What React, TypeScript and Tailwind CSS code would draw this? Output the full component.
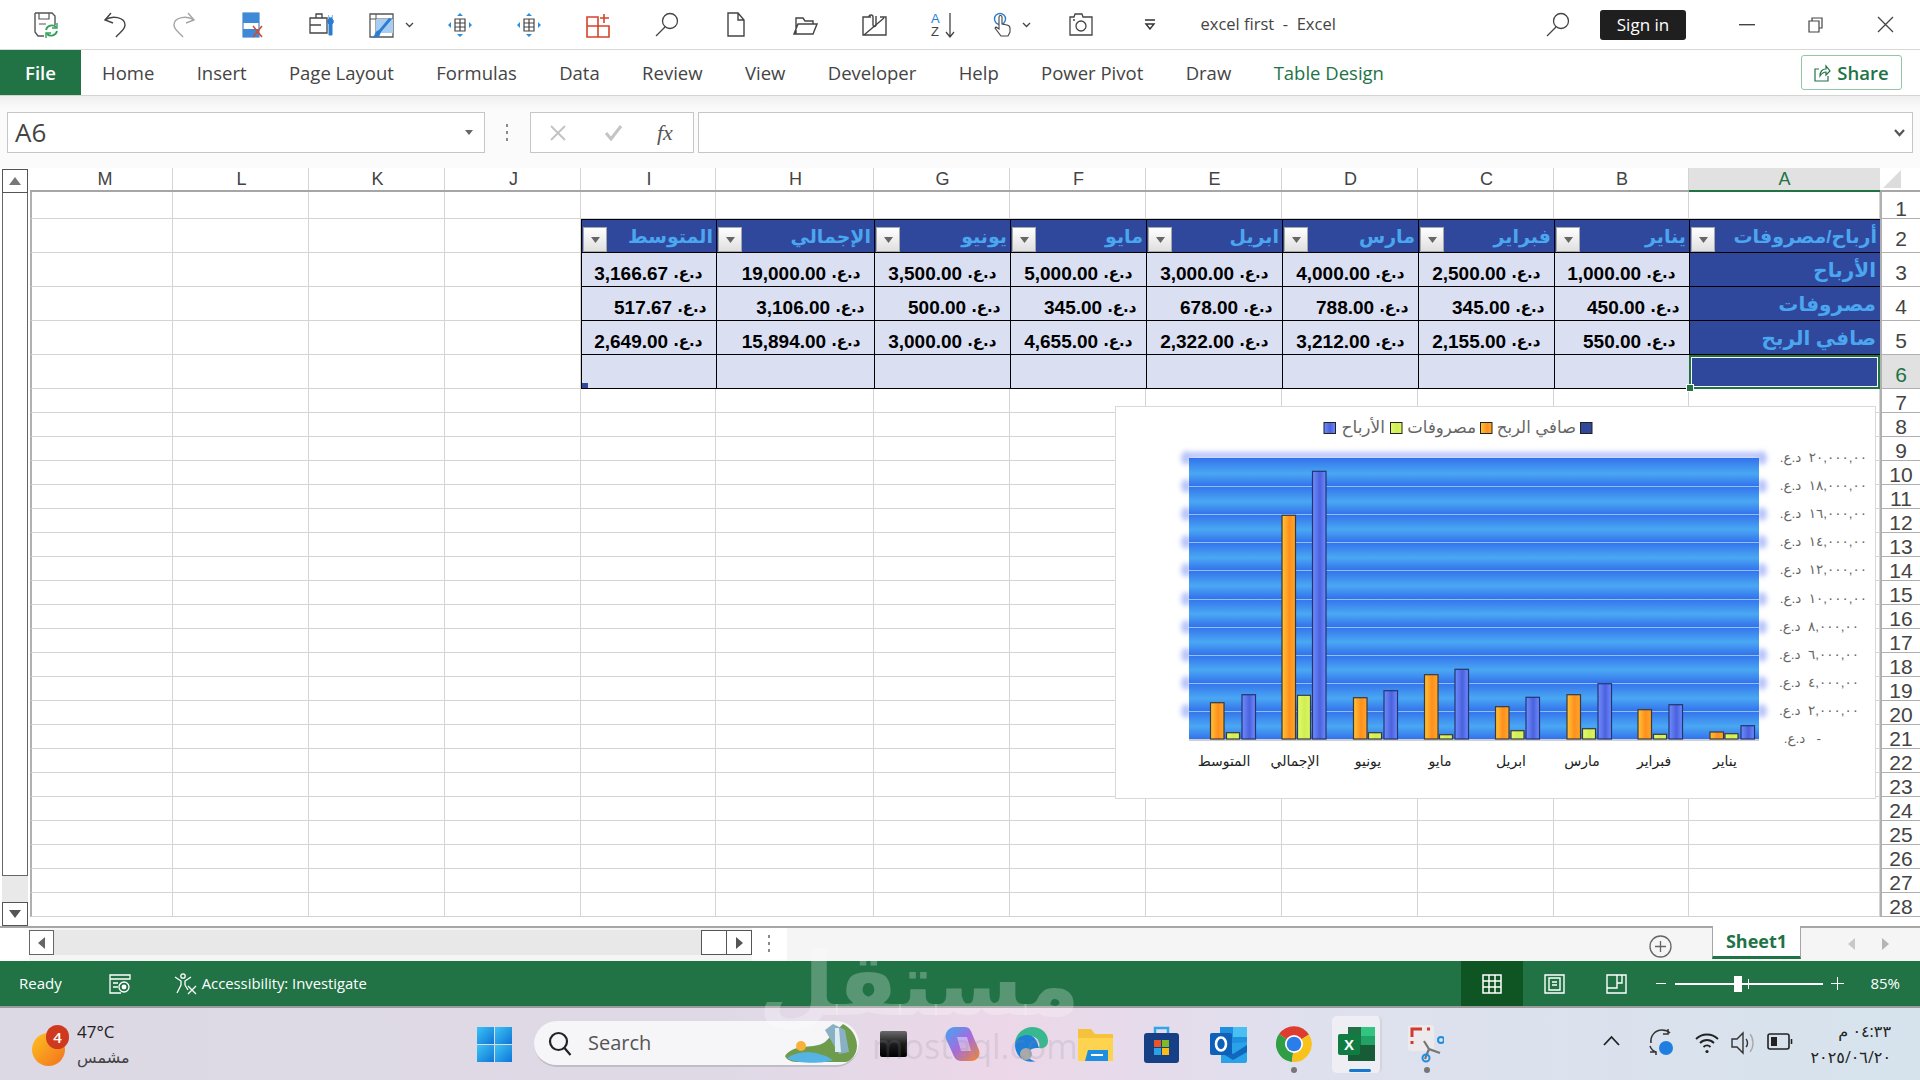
import type { ReactNode } from 'react';

const cols = 'grid grid-cols-[6px_137px_136px_136px_136px_135px_158px_136px_136px_136px_136px_136px_135px_191px_40px] grid-rows-[100%]';
const letters = ['M', 'L', 'K', 'J', 'I', 'H', 'G', 'F', 'E', 'D', 'C', 'B', 'A'];

const heads = ['المتوسط', 'الإجمالي', 'يونيو', 'مايو', 'ابريل', 'مارس', 'فبراير', 'يناير', 'أرباح/مصروفات'];
const body = [
  { label: 'الأرباح', pad: 'pr-[13.5px]', nums: ['3,166.67', '19,000.00', '3,500.00', '5,000.00', '3,000.00', '4,000.00', '2,500.00', '1,000.00'] },
  { label: 'مصروفات', pad: 'pr-[9.5px]', nums: ['517.67', '3,106.00', '500.00', '345.00', '678.00', '788.00', '345.00', '450.00'] },
  { label: 'صافي الربح', pad: 'pr-[13.5px]', nums: ['2,649.00', '15,894.00', '3,000.00', '4,655.00', '2,322.00', '3,212.00', '2,155.00', '550.00'] },
];

const tabs = ['Home', 'Insert', 'Page Layout', 'Formulas', 'Data', 'Review', 'View', 'Developer', 'Help', 'Power Pivot', 'Draw'];

// chart bars: [x, top] of orange, green, blue per group, left to right
const groups = [
  { label: 'المتوسط', lx: 1223, bars: [[1209.5, 701.7], [1225.5, 731.7], [1241, 693.7]] },
  { label: 'الإجمالي', lx: 1294, bars: [[1281, 514.3], [1296.5, 694.3], [1311.5, 470.3]] },
  { label: 'يونيو', lx: 1367, bars: [[1352.5, 696.7], [1367.5, 731.7], [1383, 689.7]] },
  { label: 'مايو', lx: 1439, bars: [[1423.5, 673.7], [1438.5, 733.7], [1454, 668.3]] },
  { label: 'ابريل', lx: 1510, bars: [[1494.5, 705.7], [1510, 729.7], [1525, 696.3]] },
  { label: 'مارس', lx: 1581, bars: [[1566, 693.7], [1581.5, 727.7], [1597, 682.7]] },
  { label: 'فبراير', lx: 1653, bars: [[1637, 708.7], [1652.5, 733.3], [1668, 703.7]] },
  { label: 'يناير', lx: 1724, bars: [[1709, 731], [1724, 732.7], [1740, 724.7]] },
];
const ticks = ['٢٠,٠٠٠,٠٠', '١٨,٠٠٠,٠٠', '١٦,٠٠٠,٠٠', '١٤,٠٠٠,٠٠', '١٢,٠٠٠,٠٠', '١٠,٠٠٠,٠٠', '٨,٠٠٠,٠٠', '٦,٠٠٠,٠٠', '٤,٠٠٠,٠٠', '٢,٠٠٠,٠٠'];
const gridY = [457, 485, 513, 541, 569, 598, 626, 654, 682, 710];

function Chevron() {
  return (
    <svg width="9" height="6" viewBox="0 0 9 6" fill="none" stroke="#444" strokeWidth="1.3"><path d="M1 1l3.5 3.5L8 1" /></svg>
  );
}

function Slot({ children }: { children: ReactNode }) {
  return <div className="w-[69px] h-full flex items-center justify-center gap-[10px] shrink-0">{children}</div>;
}

function SaveIcon() {
  return (
    <svg width="26" height="26" viewBox="0 0 26 26" fill="none">
      <path d="M2 1h17l3 3v9M2 1v19l3 4h6" stroke="#555" strokeWidth="1.4" />
      <path d="M6 1v6h10V1M6 12h7" stroke="#555" strokeWidth="1.2" />
      <path d="M13 18a6 6 0 0 1 10-3M24 19a6 6 0 0 1-10 3" stroke="#2f9e57" strokeWidth="1.8" />
      <path d="M24 11v5h-5M13 26v-5h5" stroke="#2f9e57" strokeWidth="1.4" />
    </svg>
  );
}
function UndoIcon({ c, flip }: { c: string; flip?: boolean }) {
  return (
    <svg width="24" height="26" viewBox="0 0 24 26" fill="none" stroke={c} strokeWidth="1.4" className={flip ? '-scale-x-100' : ''}>
      <path d="M8 1L2 8l8 3" />
      <path d="M2 8c7-5 20-3 20 5 0 5-6 8-9 12" />
    </svg>
  );
}
function ClearColIcon() {
  return (
    <svg width="22" height="26" viewBox="0 0 22 26">
      <rect x="1" y="1" width="16" height="24" fill="#fff" stroke="#2a6db5" />
      <rect x="1" y="1" width="16" height="10" fill="#3f8ad8" />
      <rect x="1" y="17" width="16" height="8" fill="#3f8ad8" />
      <path d="M11 14l9 11M20 14l-9 11" stroke="#d8472b" strokeWidth="1.5" />
    </svg>
  );
}
function ToolIcon() {
  return (
    <svg width="27" height="25" viewBox="0 0 27 25" fill="none">
      <path d="M1 6h17v15H1zM7 6V2h6v4M1 13h11" stroke="#444" strokeWidth="1.3" />
      <path d="M20 3v4a3 3 0 0 0 0 5v11h3V12a3 3 0 0 0 0-5V3" fill="#2b7cd3" stroke="#2b7cd3" />
      <circle cx="21.5" cy="4" r="1.6" fill="#fff" />
    </svg>
  );
}
function PaintTable() {
  return (
    <svg width="26" height="26" viewBox="0 0 26 26" fill="none">
      <path d="M1 2h23v23H1z" stroke="#555" strokeWidth="1.3" />
      <path d="M1 7h23M7 2v23" stroke="#555" />
      <rect x="7" y="7" width="17" height="14" fill="#a9cdf0" />
      <path d="M23 7L12 20l-2 5-7 1c3-2 3-6 5-7l2-1L20 6z" fill="#2b7cd3" />
    </svg>
  );
}
function ArrowsTable() {
  return (
    <svg width="24" height="24" viewBox="0 0 24 24" fill="none">
      <path d="M7 6h10v12H7zM12 6v12M7 10h10M7 14h10" stroke="#444" strokeWidth="1.2" />
      <path d="M12 0l3 3H9zM12 24l-3-3h6zM0 12l3-3v6zM24 12l-3 3V9z" fill="#2b8ddc" />
    </svg>
  );
}
function RedPlus() {
  return (
    <svg width="24" height="26" viewBox="0 0 24 26" fill="none" stroke="#d5432a" strokeWidth="1.6">
      <path d="M1 5h11v20H1zM12 14H1M12 14h11v11H12zM18 2v9M14 6h9" />
    </svg>
  );
}
function Magnifier() {
  return (
    <svg width="24" height="25" viewBox="0 0 24 25" fill="none" stroke="#444" strokeWidth="1.3">
      <circle cx="15" cy="9" r="7.5" />
      <path d="M10 15L1 24" />
    </svg>
  );
}
function DocIcon() {
  return (
    <svg width="18" height="25" viewBox="0 0 18 25" fill="none" stroke="#444" strokeWidth="1.4">
      <path d="M1 1h10l6 7v16H1zM11 1v7h6" />
    </svg>
  );
}
function FolderIcon() {
  return (
    <svg width="25" height="20" viewBox="0 0 25 20" fill="none" stroke="#444" strokeWidth="1.4">
      <path d="M3 19V3h7l2 3h8v3M1 19h19l4-10H5z" />
    </svg>
  );
}
function MailIcon() {
  return (
    <svg width="25" height="23" viewBox="0 0 25 23" fill="none" stroke="#444" strokeWidth="1.4">
      <path d="M9 4H1v18h23V4h-6M2 22L22 5" />
      <path d="M7 4a2 2 0 0 1 4 0v8a1 1 0 0 0 3 0V3" />
    </svg>
  );
}
function SortIcon() {
  return (
    <div className="relative w-[24px] h-[26px] leading-none font-['Liberation_Sans',sans-serif] text-[13px]">
      <span className="absolute left-0 top-0 text-[#2b7cd3]">A</span>
      <span className="absolute left-0 bottom-0 text-[#444]">Z</span>
      <svg className="absolute right-0 top-0" width="10" height="26" viewBox="0 0 10 26" fill="none" stroke="#444" strokeWidth="1.3"><path d="M5 1v24M1 20l4 5 4-5" /></svg>
    </div>
  );
}
function TouchIcon() {
  return (
    <svg width="19" height="25" viewBox="0 0 19 25" fill="none">
      <circle cx="7" cy="7" r="5.5" stroke="#2b7cd3" strokeWidth="1.4" />
      <path d="M6 9V5a1.5 1.5 0 0 1 3 0v7l5 1c2 .5 3 1 3 3v4l-2 4H8l-6-8 1-1 3 2z" fill="#fff" stroke="#444" strokeWidth="1.1" />
    </svg>
  );
}
function CameraIcon() {
  return (
    <svg width="24" height="23" viewBox="0 0 24 23" fill="none" stroke="#444" strokeWidth="1.3">
      <path d="M1 4h4l1-3h7l1 3h9v18H1z" />
      <circle cx="12" cy="13" r="5" />
      <path d="M4 7h2" />
    </svg>
  );
}

function TitleBar() {
  return (
    <div className="h-[50px] shrink-0 bg-white border-b border-[#d8d8d8] flex items-center pl-[11.5px]">
      <Slot><SaveIcon /></Slot>
      <Slot><UndoIcon c="#444" /></Slot>
      <Slot><UndoIcon c="#a5a5a5" flip /></Slot>
      <Slot><ClearColIcon /></Slot>
      <Slot><ToolIcon /></Slot>
      <Slot><PaintTable /><Chevron /></Slot>
      <Slot><ArrowsTable /></Slot>
      <Slot><ArrowsTable /></Slot>
      <Slot><RedPlus /></Slot>
      <Slot><Magnifier /></Slot>
      <Slot><DocIcon /></Slot>
      <Slot><FolderIcon /></Slot>
      <Slot><MailIcon /></Slot>
      <Slot><SortIcon /></Slot>
      <Slot><TouchIcon /><Chevron /></Slot>
      <Slot><CameraIcon /></Slot>
      <Slot>
        <svg width="12" height="11" viewBox="0 0 12 11" fill="none" stroke="#333" strokeWidth="1.4"><path d="M1 1h10M2 5l4 5 4-5z" /></svg>
      </Slot>
      <div className="ml-[16px] text-[16.5px] text-[#444] whitespace-pre">excel first  -  Excel</div>
      <div className="flex-1" />
      <Magnifier />
      <div className="ml-[30px] w-[86px] h-[30px] rounded-[3px] bg-[#1f1f1f] text-white text-[17px] flex items-center justify-center">Sign in</div>
      <svg className="ml-[53px]" width="16" height="2" viewBox="0 0 16 2"><rect width="16" height="1.4" fill="#444" /></svg>
      <svg className="ml-[53px]" width="15" height="16" viewBox="0 0 15 16" fill="none" stroke="#444" strokeWidth="1.2"><path d="M1 4h10v11H1zM4 4V1h10v10h-3" /></svg>
      <svg className="ml-[54px] mr-[26px]" width="17" height="17" viewBox="0 0 17 17" fill="none" stroke="#444" strokeWidth="1.3"><path d="M1 1l15 15M16 1L1 16" /></svg>
    </div>
  );
}

function TabBar() {
  return (
    <div className="h-[46px] shrink-0 bg-white border-b border-[#d4d4d4] flex items-stretch text-[18.5px] text-[#444]">
      <div className="w-[81px] bg-[#217346] text-white font-semibold flex items-center justify-center">File</div>
      <div className="flex items-center pl-[21px] pt-[1px] gap-[42.4px]">
        {tabs.map(t => <span key={t} className="whitespace-nowrap">{t}</span>)}
        <span className="text-[#217346] whitespace-nowrap">Table Design</span>
      </div>
      <div className="flex-1" />
      <div className="my-[5px] mr-[18px] w-[101px] border border-[#93c6a9] rounded-[3px] flex items-center justify-center gap-[6px] text-[#217346] font-semibold">
        <svg width="17" height="18" viewBox="0 0 17 18" fill="none" stroke="#217346" strokeWidth="1.2"><path d="M5 5H1v12h13v-5M6 12c0-5 3-7 6-7V2l4 5-4 4V8c-2 0-4 1-6 4z" /></svg>
        Share
      </div>
    </div>
  );
}

function FormulaBar() {
  return (
    <div className="h-[72px] shrink-0 pt-[16px] flex items-start bg-[linear-gradient(#efefef,#fbfbfb_14px)]">
      <div className="ml-[7px] w-[478px] h-[41px] bg-white border border-[#c6c6c6] flex items-center justify-between pl-[7px] pr-[11px]">
        <span className="text-[26px] text-[#444]">A6</span>
        <svg width="8" height="5" viewBox="0 0 8 5"><path d="M0 0h8L4 5z" fill="#666" /></svg>
      </div>
      <div className="w-[45px] h-[41px] flex items-center justify-center">
        <svg width="3" height="17" viewBox="0 0 3 17" fill="#8a8a8a"><rect width="2" height="3" /><rect y="7" width="2" height="3" /><rect y="14" width="2" height="3" /></svg>
      </div>
      <div className="w-[164px] h-[41px] bg-white border border-[#c6c6c6] flex items-center pl-[18px]">
        <svg width="18" height="18" viewBox="0 0 18 18" fill="none" stroke="#c4c4c4" strokeWidth="2"><path d="M2 2l14 14M16 2L2 16" /></svg>
        <svg className="ml-[37px]" width="19" height="16" viewBox="0 0 19 16" fill="none" stroke="#c4c4c4" strokeWidth="3"><path d="M2 8l5 6L17 1" /></svg>
        <span className="ml-[34px] font-['Liberation_Serif',serif] italic text-[22px] text-[#555]">fx</span>
      </div>
      <div className="ml-[4px] w-[1215px] h-[41px] bg-white border border-[#c6c6c6] flex items-center justify-end pr-[7px]">
        <svg width="11" height="8" viewBox="0 0 11 8" fill="none" stroke="#555" strokeWidth="2.2"><path d="M1 1l4.5 5L10 1" /></svg>
      </div>
    </div>
  );
}

function ColumnHeader() {
  return (
    <div className={`${cols} h-[24px] border-b-2 border-[#a6a6a6] font-['Liberation_Sans',sans-serif] text-[18px] leading-none text-[#444] bg-white`}>
      <div />
      {letters.map(l => (
        <div key={l} className={l === 'A'
          ? 'bg-[#e1e1e1] -mb-[2px] border-b-2 border-[#217346] text-[#217346] flex items-center justify-center'
          : 'border-r border-[#d4d4d4] flex items-center justify-center pl-[2px]'}>{l}</div>
      ))}
      <div className="relative">
        <svg className="absolute left-[3px] top-[2px]" width="18" height="18" viewBox="0 0 18 18"><path d="M0 18L18 18V0z" fill="#dcdcdc" /></svg>
      </div>
    </div>
  );
}

function RowNo({ n, on }: { n: number; on?: boolean }) {
  return (
    <div className={`border-l-2 border-b border-[#b0b0b0] flex items-center justify-center text-[21px] leading-none font-['Liberation_Sans',sans-serif] ${n <= 6 ? 'pt-[6px]' : 'pt-[3px]'} ${on ? 'bg-[#e1e1e1] text-[#217346]' : 'bg-white text-[#444]'}`}>{n}</div>
  );
}

function EmptyCells({ count }: { count: number }) {
  return (
    <>
      <div className="border-b border-[#d4d4d4] border-l-2 border-l-[#b0b0b0]" />
      {Array.from({ length: count }).map((_, i) => <div key={i} className="border-r border-b border-[#d4d4d4]" />)}
    </>
  );
}

function FilterBtn() {
  return (
    <div className="absolute left-[1px] top-[7px] w-[24px] h-[25px] border border-[#a8a8a8] bg-[linear-gradient(#ffffff,#dfdfdf)] flex items-center justify-center">
      <svg width="9" height="6" viewBox="0 0 9 6"><path d="M0 0h9L4.5 6z" fill="#666" /></svg>
    </div>
  );
}

function Row({ h, n, children, on }: { h: string; n: number; children: ReactNode; on?: boolean }) {
  return (
    <div className={`${cols} ${h}`}>
      {children}
      <RowNo n={n} on={on} />
    </div>
  );
}

function Sheet() {
  const arabic = "font-['Liberation_Sans','DejaVu_Sans',sans-serif] font-bold";
  const blank = Array.from({ length: 22 }).map((_, i) => i + 7);
  return (
    <div className="relative h-[758px] shrink-0 pl-[30px] overflow-hidden bg-white">
      <ColumnHeader />
      <Row h="h-[27px]" n={1}><EmptyCells count={13} /></Row>

      <Row h="h-[34px]" n={2}>
        <EmptyCells count={4} />
        {heads.map(t => (
          <div key={t} dir="rtl" className={`relative bg-[#30489c] border-t border-b border-l border-black text-[#4ba6f0] text-[19px] leading-[33px] pr-[3px] whitespace-nowrap overflow-hidden ${arabic}`}>
            {t}
            <div dir="ltr"><FilterBtn /></div>
          </div>
        ))}
      </Row>

      {body.map((r, i) => (
        <Row key={r.label} h="h-[34px]" n={i + 3}>
          <EmptyCells count={4} />
          {r.nums.map((v, j) => (
            <div key={j} className={`bg-[#dadff2] border-l border-b border-black text-[19px] leading-none text-black flex items-center justify-end gap-[5px] pt-[8px] ${r.pad} ${arabic}`}>
              <span className="font-['Liberation_Sans',sans-serif]">{v}</span>
              <span dir="rtl" className="font-['DejaVu_Sans',sans-serif] text-[15px]">د.ع.</span>
            </div>
          ))}
          <div dir="rtl" className={`bg-[#30489c] border-l border-b border-black text-[#4ba6f0] text-[20px] leading-[34px] pr-[4px] whitespace-nowrap overflow-hidden ${arabic}`}>{r.label}</div>
        </Row>
      ))}

      <Row h="h-[34px]" n={6} on>
        <EmptyCells count={4} />
        {heads.slice(0, 8).map((t, i) => (
          <div key={t} className="relative bg-[#dadff2] border-l border-b border-black">
            {i === 0 && <div className="absolute left-0 bottom-0 w-[6px] h-[5px] bg-[#30489c]" />}
          </div>
        ))}
        <div className="relative bg-[#30489c] border-2 border-[#217346] outline outline-1 outline-white -outline-offset-[3px]">
          <div className="absolute -left-[5px] -bottom-[5px] w-[8px] h-[8px] bg-[#217346] border border-white" />
        </div>
      </Row>

      {blank.map(n => (
        <Row key={n} h="h-[24px]" n={n}><EmptyCells count={13} /></Row>
      ))}

      <div className="absolute left-[2px] top-[1px] bottom-0 w-[26px] flex flex-col bg-[#e9e9e9]">
        <div className="h-[24px] shrink-0 border border-[#555] bg-white flex items-center justify-center">
          <svg width="12" height="8" viewBox="0 0 12 8"><path d="M0 8h12L6 0z" fill="#777" /></svg>
        </div>
        <div className="h-[683px] shrink-0 border-x border-b border-[#666] bg-white" />
        <div className="flex-1" />
        <div className="h-[24px] shrink-0 border border-[#555] bg-white flex items-center justify-center">
          <svg width="12" height="8" viewBox="0 0 12 8"><path d="M0 0h12L6 8z" fill="#555" /></svg>
        </div>
      </div>

      <Chart />
    </div>
  );
}

function Bar({ x, top, w, fill, stroke }: { x: number; top: number; w: number; fill: string; stroke: string }) {
  return <rect x={x} y={top} width={w} height={738 - top} fill={`url(#${fill})`} stroke={stroke} strokeWidth="1.2" />;
}

function Chart() {
  const ar = { fontFamily: "'Liberation Sans','DejaVu Sans',sans-serif" };
  return (
    <div className="absolute left-[1115px] top-[238px] w-[761px] h-[393px] bg-white border border-[#d9d9d9]">
      <svg width="761" height="393" viewBox="1115 406 761 393" style={ar}>
        <defs>
          <linearGradient id="band" x1="0" y1="0" x2="0" y2="1">
            <stop offset="0" stopColor="#3372ec" />
            <stop offset="0.55" stopColor="#4aa8f3" />
            <stop offset="1" stopColor="#3372ec" />
          </linearGradient>
          <pattern id="bands" x="0" y="457" width="10" height="28.1" patternUnits="userSpaceOnUse">
            <rect width="10" height="28.1" fill="url(#band)" />
          </pattern>
          <linearGradient id="og"><stop offset="0" stopColor="#ffc535" /><stop offset="0.55" stopColor="#ff8f1e" /><stop offset="1" stopColor="#ffa82a" /></linearGradient>
          <linearGradient id="gr"><stop offset="0" stopColor="#e6f870" /><stop offset="0.55" stopColor="#cdef50" /><stop offset="1" stopColor="#e0f565" /></linearGradient>
          <linearGradient id="bl"><stop offset="0" stopColor="#708cff" /><stop offset="0.55" stopColor="#4a62dc" /><stop offset="1" stopColor="#6f8aff" /></linearGradient>
          <filter id="soft" x="-50%" y="-50%" width="200%" height="200%"><feGaussianBlur stdDeviation="2.5" /></filter>
        </defs>

        <g filter="url(#soft)" fill="#b8c4fa">
          <rect x="1184" y="451" width="578" height="7" />
          {gridY.map(y => (
            <g key={y}>
              <ellipse cx="1185" cy={y} rx="5" ry="7" />
              <ellipse cx="1761" cy={y} rx="5" ry="7" />
            </g>
          ))}
        </g>
        <rect x="1188" y="457" width="570" height="281" fill="url(#bands)" />
        {gridY.slice(1).map(y => <rect key={y} x="1188" y={y} width="570" height="1" fill="#8fc0f8" />)}
        <rect x="1188" y="738" width="570" height="2" fill="#cfcfcf" />

        {groups.map(g => (
          <g key={g.label}>
            <Bar x={g.bars[0][0]} top={g.bars[0][1]} w={13.5} fill="og" stroke="#3a3a3a" />
            <Bar x={g.bars[1][0]} top={g.bars[1][1]} w={13} fill="gr" stroke="#3a3a3a" />
            <Bar x={g.bars[2][0]} top={g.bars[2][1]} w={13.5} fill="bl" stroke="#22356f" />
            <text x={g.lx} y="765" textAnchor="middle" fontSize="14" fill="#222">{g.label}</text>
          </g>
        ))}

        {ticks.map((t, i) => (
          <text key={t} x={i < 6 ? 1866 : 1858} y={gridY[i] + 4} direction="rtl" textAnchor="start" fontSize="13.5" fill="#666" xmlSpace="preserve">{t + '  د.ع.'}</text>
        ))}
        <text x="1820" y="742" direction="rtl" textAnchor="start" fontSize="13.5" fill="#666" xmlSpace="preserve">{'-   د.ع.'}</text>

        <rect x="1323" y="421.5" width="11.5" height="11" fill="url(#bl)" stroke="#222" />
        <text x="1384" y="432" direction="rtl" textAnchor="start" fontSize="17" fill="#666">الأرباح</text>
        <rect x="1389.5" y="421.5" width="11.5" height="11" fill="url(#gr)" stroke="#222" />
        <text x="1475" y="432" direction="rtl" textAnchor="start" fontSize="16.5" fill="#666">مصروفات</text>
        <rect x="1479.5" y="421.5" width="11.5" height="11" fill="url(#og)" stroke="#222" />
        <text x="1575" y="432" direction="rtl" textAnchor="start" fontSize="16.5" fill="#666">صافي الربح</text>
        <rect x="1579.5" y="421.5" width="11.5" height="11" fill="#30489c" stroke="#222" />
      </svg>
    </div>
  );
}

function SheetTabs() {
  return (
    <div className="h-[35px] shrink-0 border-t-2 border-[#a6a6a6] bg-[#f5f5f5] flex items-start relative">
      <div className="h-full w-[29px] bg-white shrink-0" />
      <div className="mt-[2px] w-[25px] h-[25px] border border-[#666] bg-white flex items-center justify-center shrink-0">
        <svg width="7" height="12" viewBox="0 0 7 12"><path d="M7 0v12L0 6z" fill="#666" /></svg>
      </div>
      <div className="mt-[2px] w-[647px] h-[25px] bg-[#e8e8e8] shrink-0" />
      <div className="mt-[2px] w-[26px] h-[25px] border border-[#555] bg-white shrink-0" />
      <div className="mt-[2px] w-[25px] h-[25px] border-y border-r border-[#555] bg-white flex items-center justify-center shrink-0">
        <svg width="7" height="12" viewBox="0 0 7 12"><path d="M0 0v12l7-6z" fill="#555" /></svg>
      </div>
      <div className="w-[35px] h-full bg-white shrink-0 flex items-start justify-center pt-[7px]">
        <svg width="3" height="17" viewBox="0 0 3 17" fill="#8a8a8a"><rect width="2" height="3" /><rect y="7" width="2" height="3" /><rect y="14" width="2" height="3" /></svg>
      </div>
      <div className="flex-1" />
      <svg className="mt-[7px]" width="23" height="23" viewBox="0 0 23 23" fill="none" stroke="#666" strokeWidth="1.3"><circle cx="11.5" cy="11.5" r="10.5" /><path d="M11.5 6v11M6 11.5h11" /></svg>
      <div className="ml-[40px] w-[89px] -mt-[2px] h-[33px] bg-white border-x border-[#a6a6a6] border-b-[3px] border-b-[#217346] text-[#217346] font-bold text-[18px] flex items-center justify-center">Sheet1</div>
      <svg className="ml-[47px] mt-[10px]" width="7" height="12" viewBox="0 0 7 12"><path d="M7 0v12L0 6z" fill="#c8c8c8" /></svg>
      <svg className="ml-[27px] mr-[31px] mt-[10px]" width="7" height="12" viewBox="0 0 7 12"><path d="M0 0v12l7-6z" fill="#b5b5b5" /></svg>
    </div>
  );
}

function StatusBar() {
  return (
    <div className="h-[47px] shrink-0 bg-[#217346] border-b-2 border-[#9a9a9a] flex items-center text-white text-[15px]">
      <span className="ml-[19px]">Ready</span>
      <svg className="ml-[47px]" width="23" height="20" viewBox="0 0 23 20" fill="none" stroke="#fff" strokeWidth="1.3">
        <path d="M1 1h20v4H1zM1 5v14h11M4 9h5M4 13h5" /><circle cx="15" cy="13" r="5" /><circle cx="15" cy="13" r="1.8" fill="#fff" />
      </svg>
      <svg className="ml-[42px]" width="23" height="22" viewBox="0 0 23 22" fill="none" stroke="#fff" strokeWidth="1.3">
        <circle cx="9" cy="3" r="2.2" /><path d="M1 4l6 4v4l-4 8M17 4l-6 4v4M11 12l3 5M14 13l8 8M22 13l-8 8" />
      </svg>
      <span className="ml-[5px] text-[14.8px]">Accessibility: Investigate</span>
      <div className="flex-1" />
      <div className="w-[62px] h-full bg-[#0f5423] flex items-center justify-center">
        <svg width="20" height="20" viewBox="0 0 20 20" fill="none" stroke="#fff" strokeWidth="1.5"><path d="M1 1h18v18H1zM7 1v18M13 1v18M1 7h18M1 13h18" /></svg>
      </div>
      <svg className="ml-[21px]" width="21" height="20" viewBox="0 0 21 20" fill="none" stroke="#fff" strokeWidth="1.4"><path d="M1 1h19v18H1zM5 4h11v12H5zM8 8h5M8 11h5" /></svg>
      <svg className="ml-[41px]" width="21" height="20" viewBox="0 0 21 20" fill="none" stroke="#fff" strokeWidth="1.4"><path d="M1 1h19v18H1zM1 14h10V1M16 1v8h-5" /></svg>
      <div className="ml-[29px] w-[10px] h-[1px] bg-white" />
      <div className="ml-[9px] w-[148px] h-[2px] bg-white relative">
        <div className="absolute left-[59px] -top-[7px] w-[8px] h-[16px] bg-white" />
        <div className="absolute left-[73px] -top-[4px] w-[1px] h-[10px] bg-white" />
      </div>
      <svg className="ml-[8px]" width="13" height="13" viewBox="0 0 13 13" stroke="#fff"><path d="M6.5 0v13M0 6.5h13" /></svg>
      <span className="ml-[26px] mr-[20px]">85%</span>
    </div>
  );
}

function WinLogo() {
  return (
    <svg width="35" height="35" viewBox="0 0 35 35">
      <defs><linearGradient id="win" x1="0" y1="0" x2="1" y2="1"><stop offset="0" stopColor="#3cc4f4" /><stop offset="1" stopColor="#0f74d8" /></linearGradient></defs>
      <rect width="17" height="17" fill="url(#win)" /><rect x="18" width="17" height="17" fill="url(#win)" />
      <rect y="18" width="17" height="17" fill="url(#win)" /><rect x="18" y="18" width="17" height="17" fill="url(#win)" />
    </svg>
  );
}

function Taskbar() {
  return (
    <div className="h-[72px] shrink-0 relative flex items-center bg-[linear-gradient(90deg,#dcd9e4_0%,#dfd9e6_38%,#ecd7e8_52%,#dfe0ee_68%,#d6e3ed_100%)]">
      <div className="relative w-[35px] h-[42px] ml-[32px] shrink-0">
        <div className="absolute left-0 top-[10px] w-[33px] h-[33px] rounded-full bg-[linear-gradient(135deg,#ffc21f,#f2701e)]" />
        <div className="absolute left-[14px] top-[2px] w-[23px] h-[24px] rounded-full bg-[#cf3a1e] text-white text-[15px] font-semibold flex items-center justify-center">4</div>
      </div>
      <div className="ml-[10px] leading-none text-[#222] shrink-0 w-[60px]">
        <div className="text-[17px]">47°C</div>
        <div className="mt-[9px] text-[16px] text-[#444] font-['Open_Sans','DejaVu_Sans',sans-serif]">مشمس</div>
      </div>
      <div className="ml-[340px] shrink-0"><WinLogo /></div>
      <div className="ml-[22px] w-[325px] h-[46px] rounded-full bg-[#f6f5f8] border-b-2 border-[#bfbdc6] flex items-center relative shrink-0">
        <svg className="ml-[14px]" width="24" height="25" viewBox="0 0 24 25" fill="none" stroke="#222" strokeWidth="2.2"><circle cx="10.5" cy="10.5" r="8.5" /><path d="M16.5 17l6 7" /></svg>
        <span className="ml-[16px] text-[20px] text-[#555]">Search</span>
        <svg className="absolute right-0 top-[1px]" width="74" height="42" viewBox="0 0 74 42">
          <path d="M0 34c10-14 30-6 40-14l18-18c8 4 14 12 14 22 0 8-6 16-12 16H14C6 40 2 38 0 34z" fill="#6f9c4c" />
          <path d="M2 36c12-8 30-8 46 2-10 4-36 4-46-2z" fill="#56b4e4" />
          <path d="M40 8l8-6 12 6 4 22-10 2z" fill="#8ab0c4" /><path d="M50 6h4l2 24h-6z" fill="#dcecf4" />
          <circle cx="16" cy="24" r="5" fill="#f8b23a" />
        </svg>
      </div>

      <div className="ml-[21px] w-[27px] h-[26px] rounded-[2px] bg-[linear-gradient(#6a6a6a,#1c1c1c_50%,#000)] shrink-0" />
      <svg className="ml-[36px] shrink-0" width="40" height="38" viewBox="0 0 40 38">
        <defs><linearGradient id="cop" x1="0" y1="0" x2="1" y2="1"><stop offset="0" stopColor="#3fa7f0" /><stop offset="0.5" stopColor="#a66be0" /><stop offset="1" stopColor="#f58a2a" /></linearGradient></defs>
        <path d="M12 2h10c5 0 6 4 8 9l6 14c2 6-2 11-8 11H18c-5 0-7-4-9-9L3 14C1 8 6 2 12 2z" fill="url(#cop)" />
        <path d="M14 12h10l4 14H18z" fill="#f3eefa" opacity="0.5" />
      </svg>
      <svg className="ml-[29px] shrink-0" width="37" height="37" viewBox="0 0 37 37" fill="none">
        <path d="M3 20C2 8 12 1 20 1c9 0 16 6 16 14 0 6-5 8-9 7 2-7-3-12-9-12C10 10 4 14 3 20z" fill="#37b88e" />
        <path d="M3 20c0-7 6-11 12-11 7 0 10 5 12 13-4 0-8 0-10 4-3 5 3 10 8 9C13 38 4 31 3 20z" fill="#1f7fd8" />
        <circle cx="14" cy="28" r="6" fill="#a9a9a9" />
      </svg>
      <svg className="ml-[28px] shrink-0" width="37" height="37" viewBox="0 0 37 37">
        <path d="M1 3h13l4 5h18v27H1z" fill="#f5c33b" /><path d="M1 12h35v23H1z" fill="#fdd34f" />
        <path d="M11 24h20v11H8z" fill="#1f8ee0" /><rect x="14" y="28" width="12" height="2" fill="#fff" />
      </svg>
      <svg className="ml-[30px] shrink-0" width="35" height="37" viewBox="0 0 35 37">
        <path d="M11 8V2h13v6" fill="none" stroke="#2fa6e8" strokeWidth="2.5" />
        <rect y="7" width="35" height="30" rx="3" fill="#173f86" />
        <rect x="10" y="14" width="7" height="7" fill="#e8552b" /><rect x="18" y="14" width="7" height="7" fill="#7fb927" />
        <rect x="10" y="22" width="7" height="7" fill="#2ba2e6" /><rect x="18" y="22" width="7" height="7" fill="#fbbc1a" />
      </svg>
      <svg className="ml-[31px] shrink-0" width="37" height="37" viewBox="0 0 37 37">
        <rect x="10" y="1" width="27" height="17" fill="#1f8fe0" /><rect x="23" y="1" width="14" height="10" fill="#4ac0f2" />
        <path d="M11 18l26-2v19a2 2 0 0 1-2 2H11z" fill="#2aa2e8" /><path d="M10 19l13 9 14-9v7l-14 8-13-8z" fill="#0f68be" />
        <rect y="7" width="22" height="22" rx="2" fill="#0e60b8" />
        <ellipse cx="11" cy="18" rx="5" ry="6.5" fill="none" stroke="#fff" strokeWidth="2.6" />
      </svg>
      <svg className="ml-[29px] shrink-0" width="36" height="36" viewBox="0 0 36 36">
        <path d="M18 18L3 8a18 18 0 0 1 30 .5z" fill="#dd3d2f" />
        <path d="M18 18L3 8a18 18 0 0 0 13 27.9z" fill="#2f9e44" />
        <path d="M18 18L33 8.500a18 18 0 0 1-17 27.400z" fill="#f9c21b" />
        <circle cx="18" cy="18" r="9" fill="#fff" /><circle cx="18" cy="18" r="7.300" fill="#2b7de9" />
      </svg>

      <div className="ml-[20px] w-[50px] h-[57px] rounded-[5px] bg-[#eeeef4] border-r-2 border-[#d2d5e0] flex items-center justify-center relative shrink-0">
        <svg width="37" height="36" viewBox="0 0 37 36">
          <rect x="10" y="1" width="27" height="34" fill="#1f7244" /><rect x="23" y="1" width="14" height="9" fill="#33c481" /><rect x="23" y="10" width="14" height="9" fill="#21a366" />
          <rect x="10" y="19" width="27" height="16" fill="#185c37" />
          <rect y="8" width="22" height="21" rx="2" fill="#107c41" />
          <text x="11" y="24" textAnchor="middle" fontSize="15" fontWeight="700" fill="#fff" fontFamily="'Liberation Sans',sans-serif">X</text>
        </svg>
        <div className="absolute left-[17px] bottom-[1px] w-[22px] h-[3px] rounded-full bg-[#1878d0]" />
      </div>
      <svg className="ml-[26px] shrink-0" width="36" height="38" viewBox="0 0 36 38">
        <rect width="26" height="26" rx="3" fill="#eceaec" />
        <path d="M4 12V4h10M4 16v3M19 4h3" fill="none" stroke="#d23a2e" strokeWidth="3" />
        <path d="M16 16l5 8 11 4M21 24l-4 10" fill="none" stroke="#777" strokeWidth="2.2" />
        <circle cx="33" cy="15" r="3" fill="none" stroke="#1f8de0" strokeWidth="2" /><circle cx="18" cy="33" r="3.500" fill="none" stroke="#1f8de0" strokeWidth="2" />
      </svg>

      <div className="absolute left-[1291px] bottom-[7px] w-[6px] h-[6px] rounded-full bg-[#777]" />
      <div className="absolute left-[1424px] bottom-[7px] w-[6px] h-[6px] rounded-full bg-[#777]" />

      <svg className="absolute left-[1603px] top-[27px]" width="17" height="11" viewBox="0 0 17 11" fill="none" stroke="#222" strokeWidth="1.8"><path d="M1 10l7.500-8L16 10" /></svg>
      <svg className="absolute left-[1648px] top-[20px]" width="26" height="28" viewBox="0 0 26 28" fill="none" stroke="#333" strokeWidth="1.5">
        <path d="M3 15C2 8 7 2 14 2c3 0 6 1 8 3M20 1v5h-5M2 18c1 3 3 5 6 6M2 24h6v3" />
        <circle cx="18" cy="20" r="7" fill="#1f7fe0" stroke="none" />
      </svg>
      <svg className="absolute left-[1695px] top-[23px]" width="24" height="24" viewBox="0 0 24 24" fill="none" stroke="#222" strokeWidth="1.8">
        <path d="M1 8c6-6 16-6 22 0M5 12c4-4 10-4 14 0M8.500 16c2-2 5-2 7 0" /><circle cx="12" cy="20.500" r="1.600" fill="#222" stroke="none" />
      </svg>
      <svg className="absolute left-[1731px] top-[23px]" width="23" height="24" viewBox="0 0 23 24" fill="none" stroke="#333" strokeWidth="1.4">
        <path d="M1 8h5l6-6v20l-6-6H1zM15 8c2 2 2 6 0 8" /><path d="M19 3c4 5 4 13 0 18" stroke="#aaa" />
      </svg>
      <svg className="absolute left-[1767px] top-[25px]" width="26" height="18" viewBox="0 0 26 18" fill="none" stroke="#222" strokeWidth="1.6">
        <rect x="1" y="1" width="21" height="15" rx="2" /><rect x="4" y="4" width="6" height="9" fill="#222" stroke="none" /><path d="M24.500 6v5" />
      </svg>
      <div dir="rtl" className="absolute right-[29px] top-[10px] text-[16px] leading-[26px] text-[#222] font-['Open_Sans','DejaVu_Sans',sans-serif] whitespace-nowrap">
        <div>٠٤:٣٣ م</div>
        <div dir="ltr">٢٠٢٥/٠٦/٢٠</div>
      </div>
    </div>
  );
}

export default function App() {
  return (
    <div className="relative w-[1920px] h-[1080px] overflow-hidden flex flex-col bg-white font-['Open_Sans','DejaVu_Sans',sans-serif]">
      <TitleBar />
      <TabBar />
      <FormulaBar />
      <Sheet />
      <SheetTabs />
      <StatusBar />
      <Taskbar />
      <div dir="rtl" className="absolute left-[840px] top-[930px] w-[240px] text-center text-[88px] leading-[110px] font-bold text-white/25 font-['DejaVu_Sans',sans-serif] pointer-events-none">مستقل</div>
      <div className="absolute left-[872px] top-[1026px] text-[34px] leading-[40px] text-[#8a8a9a]/20 pointer-events-none">mostaql.com</div>
    </div>
  );
}
